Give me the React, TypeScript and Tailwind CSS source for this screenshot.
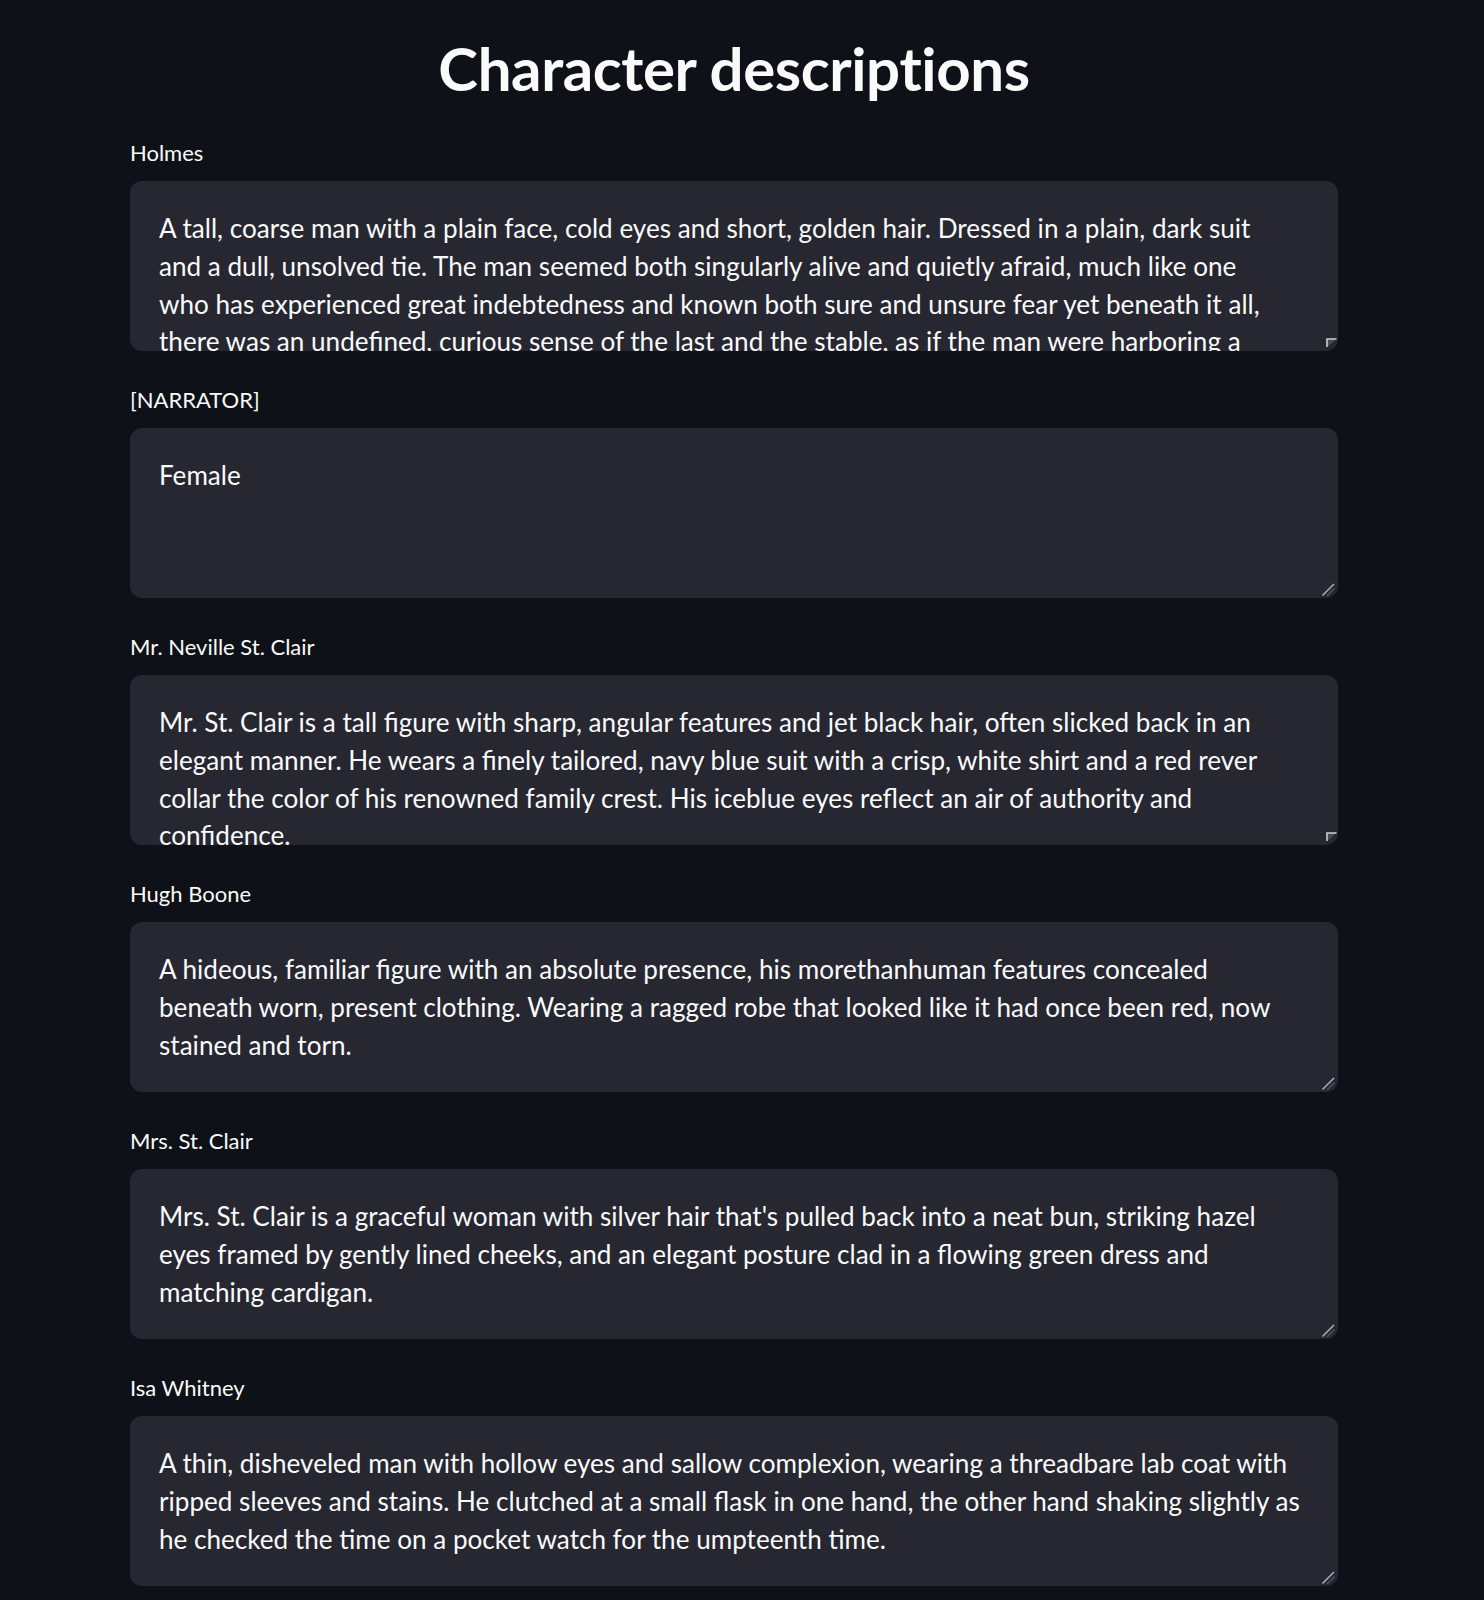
import React from "react";

type Item = { label: string; lines: string[]; overflow?: boolean };

const items: Item[] = [
  {
    label: "Holmes",
    overflow: true,
    lines: [
      "A tall, coarse man with a plain face, cold eyes and short, golden hair. Dressed in a plain, dark suit",
      "and a dull, unsolved tie. The man seemed both singularly alive and quietly afraid, much like one",
      "who has experienced great indebtedness and known both sure and unsure fear yet beneath it all,",
      "there was an undefined, curious sense of the last and the stable, as if the man were harboring a",
    ],
  },
  { label: "[NARRATOR]", lines: ["Female"] },
  {
    label: "Mr. Neville St. Clair",
    overflow: true,
    lines: [
      "Mr. St. Clair is a tall figure with sharp, angular features and jet black hair, often slicked back in an",
      "elegant manner. He wears a finely tailored, navy blue suit with a crisp, white shirt and a red rever",
      "collar the color of his renowned family crest. His iceblue eyes reflect an air of authority and",
      "confidence.",
    ],
  },
  {
    label: "Hugh Boone",
    lines: [
      "A hideous, familiar figure with an absolute presence, his morethanhuman features concealed",
      "beneath worn, present clothing. Wearing a ragged robe that looked like it had once been red, now",
      "stained and torn.",
    ],
  },
  {
    label: "Mrs. St. Clair",
    lines: [
      "Mrs. St. Clair is a graceful woman with silver hair that's pulled back into a neat bun, striking hazel",
      "eyes framed by gently lined cheeks, and an elegant posture clad in a flowing green dress and",
      "matching cardigan.",
    ],
  },
  {
    label: "Isa Whitney",
    lines: [
      "A thin, disheveled man with hollow eyes and sallow complexion, wearing a threadbare lab coat with",
      "ripped sleeves and stains. He clutched at a small flask in one hand, the other hand shaking slightly as",
      "he checked the time on a pocket watch for the umpteenth time.",
    ],
  },
];

function ResizeGrip() {
  return (
    <svg
      className="absolute right-[2px] bottom-[1px]"
      width="15"
      height="15"
      viewBox="0 0 15 15"
    >
      <line x1="1.5" y1="13.5" x2="13" y2="2" stroke="#b4b4b8" strokeWidth="1.4" />
      <line x1="6" y1="14" x2="13.5" y2="6.5" stroke="#55565e" strokeWidth="1.2" />
    </svg>
  );
}

function ScrollCorner() {
  return (
    <svg
      className="absolute right-[1px] bottom-[4px]"
      width="11"
      height="9"
      viewBox="0 0 11 9"
    >
      <polygon points="1.5,1.5 10,1.5 1.5,9" fill="#4a4b52" />
      <path d="M1 9 V1 H10.5" fill="none" stroke="#d0d0d4" strokeWidth="1.6" />
    </svg>
  );
}

function Field({ item }: { item: Item }) {
  return (
    <div className="mb-[35px]">
      <div className="h-[28px] leading-[28px] text-[22px] mb-[14px] text-[#fafafa]">
        {item.label}
      </div>
      <div className="relative h-[170px] rounded-[12px] bg-[#262730] overflow-hidden">
        <div className="pt-[29px] pl-[29px] pr-[20px] text-[26.1px] leading-[37.8px] text-[#fafafa]">
          {item.lines.map((l, i) => (
            <div key={i} className="whitespace-nowrap">
              {l}
            </div>
          ))}
        </div>
        {item.overflow ? <ScrollCorner /> : <ResizeGrip />}
      </div>
    </div>
  );
}

export default function App() {
  return (
    <div className="min-h-[1600px] w-full bg-[#0e1117] text-[#fafafa] font-['Lato',sans-serif]">
      <div className="ml-[130px] w-[1208px]">
        <h1 className="pt-[32px] text-center text-[60px] leading-[72px] font-bold mb-[35px] tracking-[-0.4px]">
          Character descriptions
        </h1>
        {items.map((it) => (
          <Field key={it.label} item={it} />
        ))}
      </div>
    </div>
  );
}
